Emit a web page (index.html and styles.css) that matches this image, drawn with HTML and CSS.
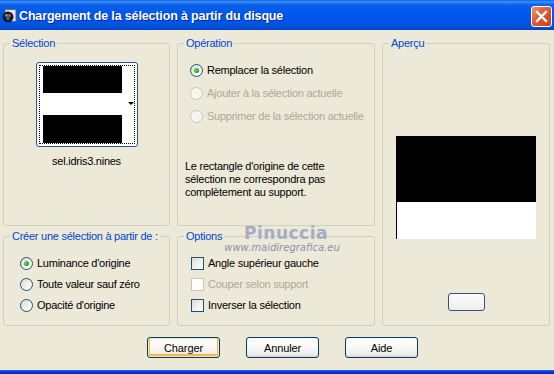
FILE: index.html
```html
<!DOCTYPE html>
<html lang="fr">
<head>
    <meta charset="UTF-8">
    <meta name="viewport" content="width=device-width, initial-scale=1.0">
    <title>Chargement de la sélection à partir du disque</title>
    <link rel="stylesheet" href="styles.css">
</head>
<body>
    <div class="window">
        <div class="titlebar">
            <svg class="app-icon" width="15" height="14" viewBox="0 0 15 14">
                <rect x="3" y="0.5" width="11" height="12" rx="1" fill="#dfe6ee" stroke="#5a6b80"/>
                <circle cx="6" cy="8" r="5.5" fill="#1a1a1a"/>
                <circle cx="4.5" cy="6.5" r="1.4" fill="#3bd13b"/>
                <circle cx="7.5" cy="6.5" r="1.4" fill="#d83a9a"/>
                <circle cx="6" cy="9.5" r="1.4" fill="#3a7be0"/>
            </svg>
            <span class="title">Chargement de la sélection à partir du disque</span>
            <div class="close-btn">
                <svg width="21" height="21" viewBox="0 0 21 21">
                    <path d="M6 6 L15 15 M15 6 L6 15" stroke="#fff" stroke-width="2.4" stroke-linecap="square"/>
                </svg>
            </div>
        </div>

        <div class="client">
            <div class="groups">
                <fieldset class="group group-selection">
                    <legend>Sélection</legend>
                    <div class="thumb">
                        <div class="thumb-inner">
                            <div class="thumb-image">
                                <div class="band-black top"></div>
                                <div class="band-white"></div>
                                <div class="band-black bottom"></div>
                            </div>
                            <span class="thumb-arrow"></span>
                        </div>
                    </div>
                    <div class="thumb-name">sel.idris3.nines</div>
                </fieldset>

                <fieldset class="group group-operation">
                    <legend>Opération</legend>
                    <div class="option-list op-list">
                        <label class="option"><span class="radio checked"></span>Remplacer la sélection</label>
                        <label class="option disabled"><span class="radio"></span>Ajouter à la sélection actuelle</label>
                        <label class="option disabled"><span class="radio"></span>Supprimer de la sélection actuelle</label>
                    </div>
                    <p class="note">Le rectangle d'origine de cette<br>sélection ne correspondra pas<br>complètement au support.</p>
                </fieldset>

                <fieldset class="group group-preview">
                    <legend>Aperçu</legend>
                    <div class="preview">
                        <div class="preview-black"></div>
                        <div class="preview-white"></div>
                    </div>
                    <div class="preview-btn"></div>
                </fieldset>

                <fieldset class="group group-source">
                    <legend>Créer une sélection à partir de :</legend>
                    <div class="option-list small-list">
                        <label class="option"><span class="radio checked"></span>Luminance d'origine</label>
                        <label class="option"><span class="radio"></span>Toute valeur sauf zéro</label>
                        <label class="option"><span class="radio"></span>Opacité d'origine</label>
                    </div>
                </fieldset>

                <fieldset class="group group-options">
                    <legend>Options</legend>
                    <div class="option-list small-list">
                        <label class="option"><span class="check"></span>Angle supérieur gauche</label>
                        <label class="option disabled"><span class="check"></span>Couper selon support</label>
                        <label class="option"><span class="check"></span>Inverser la sélection</label>
                    </div>
                </fieldset>
            </div>

            <div class="buttons">
                <button class="btn default">Charger</button>
                <button class="btn">Annuler</button>
                <button class="btn">Aide</button>
            </div>

            <div class="watermark">
                <div class="wm-name">Pinuccia</div>
                <div class="wm-site">www.maidiregrafica.eu</div>
            </div>
        </div>

        <div class="frame-bottom"></div>
    </div>
</body>
</html>
```

FILE: styles.css
```css
html, body {
    margin: 0;
    padding: 0;
    width: 554px;
    height: 374px;
    overflow: hidden;
    font-family: 'Liberation Sans', Arial, sans-serif;
    font-size: 11px;
    letter-spacing: -0.25px;
    color: #000;
}
.window {
    width: 554px;
    height: 374px;
    display: flex;
    flex-direction: column;
    background-color: #ece9d8;
}

/* title bar */
.titlebar {
    height: 30px;
    flex: none;
    display: flex;
    align-items: center;
    background: linear-gradient(#0a5fe8 0%, #3d8ff6 6%, #0c62ea 16%, #0058ee 40%, #0055e5 75%, #004fd6 92%, #0040bd 100%);
}
.app-icon {
    margin-left: 2px;
    margin-top: 1px;
}
.title {
    margin-left: 2px;
    color: #fff;
    font-weight: bold;
    font-size: 12.5px;
    letter-spacing: -0.15px;
    text-shadow: 1px 1px #0a2a8c;
    margin-top: 1px;
}
.close-btn {
    margin-left: auto;
    margin-right: 2px;
    margin-top: 3px;
    width: 21px;
    height: 21px;
    box-sizing: border-box;
    border: 1px solid #fff;
    border-radius: 3px;
    background: linear-gradient(135deg, #f0906c 0%, #e05a34 45%, #c8411e 100%);
    display: flex;
}
.close-btn svg {
    margin: -1px;
}

/* client area */
.client {
    position: relative;
    flex: 1;
    padding: 7px 0 0 3px;
}
.groups {
    display: grid;
    grid-template-columns: 167px 198px 168px;
    grid-template-rows: 189px 96px;
    column-gap: 7px;
    row-gap: 4px;
}
.group {
    margin: 0;
    padding: 0;
    min-width: 0;
    border: 1px solid #d0d0bf;
    border-radius: 3px;
    box-sizing: border-box;
}
.group legend {
    margin-left: 6px;
    padding: 0 2px;
    color: #0046d5;
    line-height: 13px;
}
.group-preview {
    grid-column: 3;
    grid-row: 1 / span 2;
}

/* selection thumbnail */
.group-selection {
    display: flex;
    flex-direction: column;
    align-items: center;
}
.thumb {
    margin-top: 12px;
    width: 102px;
    height: 85px;
    box-sizing: border-box;
    padding: 2px;
    border: 1px solid #2e5485;
    border-radius: 3px;
    background: #fff;
}
.thumb-inner {
    height: 100%;
    box-sizing: border-box;
    border: 1px dotted #000;
    padding-left: 3px;
    display: flex;
    align-items: center;
}
.thumb-image {
    width: 79px;
    height: 100%;
    display: flex;
    flex-direction: column;
}
.band-black.top {
    height: 27px;
    background: #000;
}
.band-white {
    height: 22px;
    background: #fff;
}
.band-black.bottom {
    flex: 1;
    background: #000;
}
.thumb-arrow {
    margin-left: auto;
    margin-right: 0;
    margin-top: -2px;
    width: 0;
    height: 0;
    border-left: 3px solid transparent;
    border-right: 3px solid transparent;
    border-top: 3px solid #000;
}
.thumb-name {
    margin-top: 8px;
    line-height: 13px;
}

/* radios and checkboxes */
.option-list {
    display: flex;
    flex-direction: column;
}
.op-list {
    margin-top: 14px;
    padding-left: 12px;
    gap: 10px;
}
.small-list {
    margin-top: 14px;
    gap: 8px;
}
.group-source .small-list {
    padding-left: 16px;
}
.group-options .small-list {
    padding-left: 13px;
}
.option {
    display: flex;
    align-items: center;
    gap: 4px;
    height: 13px;
    line-height: 13px;
    white-space: nowrap;
}
.option.disabled {
    color: #aca899;
}
.radio {
    width: 13px;
    height: 13px;
    box-sizing: border-box;
    border: 1px solid #1c5180;
    border-radius: 50%;
    background: linear-gradient(135deg, #dcd9cd 0%, #f4f3ee 60%, #fff 100%);
    display: flex;
    align-items: center;
    justify-content: center;
}
.radio.checked::after {
    content: "";
    width: 5px;
    height: 5px;
    border-radius: 50%;
    background: radial-gradient(circle at 35% 35%, #5ee05e, #21a121 70%);
}
.option.disabled .radio {
    border-color: #cac8bb;
    background: #f6f5f0;
}
.check {
    width: 13px;
    height: 13px;
    box-sizing: border-box;
    border: 1px solid #1c5180;
    background: linear-gradient(135deg, #dcdcd7 0%, #f4f4f0 60%, #fff 100%);
}
.option.disabled .check {
    border-color: #cac8bb;
    background: #fff;
}
.note {
    margin: 37px 0 0 7px;
    line-height: 13px;
}

/* preview */
.group-preview {
    display: flex;
    flex-direction: column;
    align-items: center;
}
.preview {
    margin-top: 86px;
    width: 140px;
    height: 103px;
    display: flex;
    flex-direction: column;
}
.preview-black {
    height: 66px;
    background: #000;
}
.preview-white {
    flex: 1;
    background: #fff;
    border-left: 1px solid #000;
}
.preview-btn {
    margin-top: 54px;
    width: 37px;
    height: 18px;
    box-sizing: border-box;
    border: 1px solid #2e5485;
    border-radius: 3px;
    background: linear-gradient(#fbfbf9, #f0efe9);
}

/* dialog buttons */
.buttons {
    display: flex;
    gap: 26px;
    margin-top: 11px;
    padding-left: 144px;
}
.btn {
    width: 73px;
    height: 21px;
    padding: 0;
    box-sizing: border-box;
    font-family: 'Liberation Sans', Arial, sans-serif;
    font-size: 11px;
    letter-spacing: -0.1px;
    color: #000;
    border: 1px solid #003c74;
    border-radius: 3px;
    background: linear-gradient(#ffffff 0%, #f8f8f5 50%, #ecebe4 90%, #d6d0c5 100%);
}
.btn.default {
    box-shadow: inset 0 0 0 1px #fce9a8, inset 0 -1px 0 2px #f0b848;
}

/* watermark over the groups */
.watermark {
    position: absolute;
    left: 222px;
    top: 194px;
    width: 120px;
    text-align: center;
    pointer-events: none;
}
.wm-name {
    font-family: 'DejaVu Sans', sans-serif;
    font-size: 17px;
    font-weight: bold;
    letter-spacing: 0.5px;
    color: #a7acc6;
    line-height: 18px;
    padding-left: 8px;
}
.wm-site {
    font-family: 'DejaVu Sans', sans-serif;
    font-style: italic;
    font-size: 10px;
    letter-spacing: 0;
    color: #8b90ab;
    line-height: 12px;
}

.frame-bottom {
    height: 4px;
    flex: none;
    background: linear-gradient(#3a68e0 0%, #0a3fd8 30%, #0033c8 70%, #001ea0 100%);
}
```
